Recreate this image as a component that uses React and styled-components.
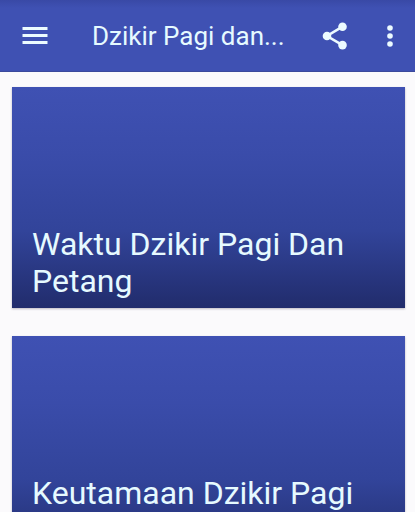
import React from 'react';
import styled, { createGlobalStyle } from 'styled-components';

const GlobalStyle = createGlobalStyle`
  * {
    box-sizing: border-box;
  }

  html {
    scrollbar-width: none;
  }

  body {
    margin: 0;
    background: #fbfafc;
    color: #e6faff;
    font-family: Roboto, "Liberation Sans", sans-serif;
  }
`;

const Toolbar = styled.header`
  display: flex;
  align-items: center;
  height: 72px;
  padding-left: 16px;
  background: linear-gradient(#3949a6, #3f51b3 8px);
  border-bottom: 1px solid #3c4a9c;
`;

const IconButton = styled.button`
  display: flex;
  flex: none;
  align-items: center;
  justify-content: center;
  width: ${({ $width }) => $width}px;
  height: 48px;
  padding: 0;
  border: 0;
  background: none;
  color: #ecfbff;
  cursor: pointer;
`;

const Title = styled.h1`
  flex: 1;
  min-width: 0;
  margin: 0;
  padding-left: 38px;
  overflow: hidden;
  font-weight: 400;
  font-size: 26px;
  line-height: 32px;
  white-space: nowrap;
`;

const List = styled.main`
  display: flex;
  flex-direction: column;
  gap: 28px;
  padding: 15px 10px 28px 12px;
`;

const Card = styled.a`
  display: flex;
  align-items: flex-end;
  height: 221px;
  padding: 0 20px 8px;
  background: linear-gradient(#3f51b3, #3a4caa 30%, #32449a 65%, #212c6c);
  box-shadow: 0 1px 2px rgba(40, 30, 60, 0.3);
  color: inherit;
  text-decoration: none;
`;

const CardTitle = styled.h2`
  min-height: 74px;
  margin: 0;
  font-weight: 400;
  font-size: 32px;
  line-height: 37px;
`;

const MenuIcon = () => (
  <svg width="26" height="20" viewBox="0 0 26 20" fill="currentColor" aria-hidden="true">
    <path d="M.5 1h25v3H.5zM.5 8h25v3H.5zM.5 15h25v3H.5z" />
  </svg>
);

const ShareIcon = () => (
  <svg width="26" height="28" viewBox="0 0 26 28" fill="currentColor" aria-hidden="true">
    <path d="M20.5 4.700 5 14l15.500 9.100" fill="none" stroke="currentColor" strokeWidth="2.600" />
    <circle cx="20.500" cy="4.700" r="4.300" />
    <circle cx="5" cy="14" r="4.300" />
    <circle cx="20.500" cy="23.100" r="4.300" />
  </svg>
);

const MoreIcon = () => (
  <svg width="6" height="24" viewBox="0 0 6 24" fill="currentColor" aria-hidden="true">
    <circle cx="3" cy="4" r="2.800" />
    <circle cx="3" cy="12" r="2.800" />
    <circle cx="3" cy="20" r="2.800" />
  </svg>
);

const topics = ['Waktu Dzikir Pagi Dan Petang', 'Keutamaan Dzikir Pagi'];

export default function App() {
  return (
    <>
      <GlobalStyle />
      <Toolbar>
        <IconButton $width={38} aria-label="Menu">
          <MenuIcon />
        </IconButton>
        <Title>Dzikir Pagi dan...</Title>
        <IconButton $width={60} aria-label="Share">
          <ShareIcon />
        </IconButton>
        <IconButton $width={50} aria-label="More options">
          <MoreIcon />
        </IconButton>
      </Toolbar>
      <List>
        {topics.map((topic) => (
          <Card key={topic} href="#">
            <CardTitle>{topic}</CardTitle>
          </Card>
        ))}
      </List>
    </>
  );
}
